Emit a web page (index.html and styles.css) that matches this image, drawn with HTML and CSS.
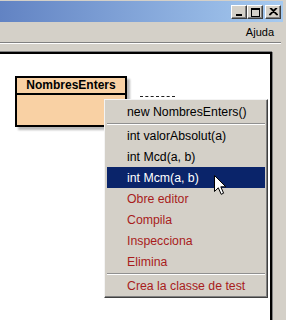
FILE: index.html
```html
<!DOCTYPE html>
<html lang="ca">
<head>
  <meta charset="UTF-8" />
  <title>BlueJ - NombresEnters</title>
  <link rel="stylesheet" href="styles.css">
</head>
<body>
  <div class="window">
    <div class="titlebar">
      <span class="tbtn">
        <svg width="8" height="8" viewBox="0 0 8 8"><rect x="1" y="6" width="6" height="2" fill="#000"/></svg>
      </span>
      <span class="tbtn">
        <svg width="9" height="9" viewBox="0 0 9 9"><rect x="0.5" y="0.5" width="8" height="8" fill="none" stroke="#000"/><rect x="0" y="0" width="9" height="2" fill="#000"/></svg>
      </span>
      <span class="tbtn close">
        <svg width="9" height="8" viewBox="0 0 9 8"><path d="M1 0 L8 7 M8 0 L1 7 M2 0 L9 7 M7 0 L0 7" stroke="#000" stroke-width="1.2"/></svg>
      </span>
    </div>

    <div class="menubar">
      <span class="menu-title">Ajuda</span>
    </div>

    <div class="canvas">
      <div class="classbox">
        <div class="class-name">NombresEnters</div>
        <div class="class-body"></div>
      </div>

      <div class="link"></div>

      <ul class="popup">
        <li>new NombresEnters()</li>
        <li class="sep"></li>
        <li>int valorAbsolut(a)</li>
        <li>int Mcd(a, b)</li>
        <li class="active">int Mcm(a, b)</li>
        <li class="red">Obre editor</li>
        <li class="red">Compila</li>
        <li class="red">Inspecciona</li>
        <li class="red">Elimina</li>
        <li class="sep"></li>
        <li class="red">Crea la classe de test</li>
      </ul>

      <svg class="cursor" width="13" height="20" viewBox="0 0 13 20">
        <path d="M0.5 0.5 L0.5 16.5 L4.3 12.8 L7.2 19.3 L9.6 18.2 L6.8 11.8 L11.8 11.8 Z" fill="#fff" stroke="#000" stroke-width="1"/>
      </svg>
    </div>
  </div>
</body>
</html>
```

FILE: styles.css
```css
body {
  margin: 0;
  width: 286px;
  height: 320px;
  overflow: hidden;
  background: #d4d0c8;
  font-family: "Liberation Sans", Arial, sans-serif;
}

.window {
  width: 283px;
  height: 320px;
  display: flex;
  flex-direction: column;
}

.titlebar {
  height: 22px;
  border-top: 1px solid #d4d0c8;
  background: linear-gradient(to right, #6283c3, #a6caf0);
  display: flex;
  justify-content: flex-end;
  align-items: flex-start;
  padding: 4px 2px 0 0;
  box-sizing: border-box;
}

.tbtn {
  width: 16px;
  height: 14px;
  box-sizing: border-box;
  background: #d4d0c8;
  border: 1px solid;
  border-color: #fff #404040 #404040 #fff;
  box-shadow: inset -1px -1px #808080;
  display: flex;
  align-items: center;
  justify-content: center;
}

.tbtn.close {
  margin-left: 2px;
}

.menubar {
  height: 20px;
  display: flex;
  justify-content: flex-end;
  align-items: center;
  padding-right: 7px;
  border-bottom: 1px solid #808080;
  box-shadow: 0 1px #fff;
  margin-right: 2px;
}

.menu-title {
  font-size: 11px;
  color: #000;
}

.canvas {
  position: relative;
  flex: 1;
  margin-top: 9px;
  width: 270px;
  background: #fff;
  border-top: 2px solid #000;
  border-right: 2px solid #000;
  box-shadow: 0 -1px #808080, 1px 0 #808080;
}

.classbox {
  margin: 22px 0 0 15px;
  width: 112px;
  height: 51px;
  box-sizing: border-box;
  border: 2px solid #000;
  background: #f9d1a4;
  box-shadow: 3px 3px 2px rgba(0, 0, 0, 0.28);
  display: flex;
  flex-direction: column;
}

.class-name {
  height: 15px;
  border-bottom: 2px solid #000;
  font-size: 12px;
  font-weight: bold;
  text-align: center;
  line-height: 15px;
}

.link {
  position: absolute;
  left: 140px;
  top: 42px;
  width: 35px;
  border-top: 1px dashed #202020;
}

.popup {
  position: absolute;
  left: 104px;
  top: 45px;
  width: 164px;
  box-sizing: border-box;
  margin: 0;
  padding: 1px 2px;
  list-style: none;
  background: #d4d0c8;
  border: 1px solid;
  border-color: #f4f4f4 #404040 #404040 #f4f4f4;
  box-shadow: inset -1px -1px #808080;
}

.popup li {
  height: 21px;
  line-height: 22px;
  padding-left: 20px;
  font-size: 12.3px;
  color: #000;
  white-space: nowrap;
}

.popup li.sep {
  height: 1px;
  margin: 1px 0 1px;
  padding: 0;
  background: #909090;
  box-shadow: 0 1px #fff;
}

.popup li.active {
  background: #0a246a;
  color: #fff;
}

.popup li.red {
  color: #a81c1c;
}

.cursor {
  position: absolute;
  left: 214px;
  top: 121px;
}
```
